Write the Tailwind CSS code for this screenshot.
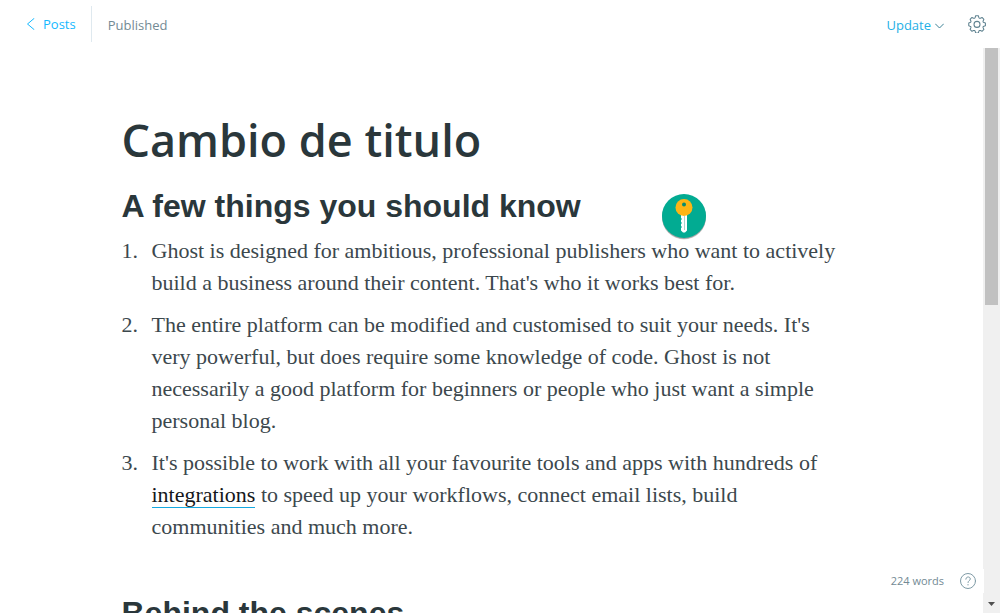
<!DOCTYPE html>
<html lang="en">
<head>
<meta charset="utf-8">
<meta name="viewport" content="width=device-width, initial-scale=1">
<title>Cambio de titulo</title>
<script src="https://cdn.jsdelivr.net/npm/@tailwindcss/browser@4"></script>
</head>
<body class="relative flex h-screen flex-col overflow-hidden bg-white font-['Open_Sans','Noto_Sans',sans-serif] text-[#738a94]">
  <header class="flex h-12 shrink-0 items-center justify-between pr-[14px] pl-[26px] text-[13px]">
    <div class="flex h-full items-center">
      <a href="#" class="flex items-center gap-2 text-[#14b8ff]">
        <svg class="h-3 w-[9px]" viewBox="0 0 9 12" fill="none" stroke="currentColor" stroke-width="1" stroke-linecap="round" aria-hidden="true"><path d="M8 .5 1.500 6 8 11.500"/></svg>
        <span class="pt-0.5">Posts</span>
      </a>
      <div class="mr-4 ml-[15px] h-9 w-px bg-[#dfe9ef]"></div>
      <span class="pt-1">Published</span>
    </div>
    <div class="flex items-center gap-6">
      <button type="button" class="flex items-center gap-1 pt-1 text-[#1fb0e6]">
        <span>Update</span>
        <svg class="h-[6px] w-[9px] text-[#3e8296]" viewBox="0 0 9 6" fill="none" stroke="currentColor" stroke-width="1" stroke-linecap="round" aria-hidden="true"><path d="M.5 1 4.500 5 8.500 1"/></svg>
      </button>
      <button type="button" aria-label="Settings">
        <svg class="size-[18px]" viewBox="0 0 24 24" fill="none" stroke="#5f8290" stroke-width="1.400" stroke-linejoin="round" aria-hidden="true"><path d="M9.600 3.200 10.200 1h3.600l.6 2.200c.3 1 1.300 1.500 2.200 1.100l2.100-1 2.500 2.500-1 2.100c-.4.900.1 1.900 1.100 2.200l1.900.6v3.600l-2 .6c-1 .3-1.400 1.300-1 2.200l1 2.100-2.500 2.500-2.100-1c-.9-.4-1.900.1-2.200 1.100l-.6 2.200h-3.600l-.6-2.200c-.3-1-1.300-1.500-2.200-1.100l-2.100 1-2.500-2.500 1-2.100c.4-.9-.1-1.900-1.100-2.200L1 14.300v-3.600l1.700-.6c1-.3 1.500-1.300 1.100-2.200l-1-2.100 2.500-2.500 2.100 1c.9.400 1.900-.1 2.200-1.100Z"/><circle cx="12" cy="12.500" r="4"/></svg>
      </button>
    </div>
  </header>

  <div class="flex min-h-0 flex-1">
    <main class="min-w-0 flex-1 overflow-hidden">
      <article class="mx-auto max-w-[740px] pt-16 text-[#2a373b]">
        <h1 class="text-[45px] leading-14 font-semibold">Cambio de titulo</h1>
        <h2 class="mt-5 font-['Liberation_Sans',Arial,sans-serif] text-[32px] leading-9 font-bold">A few things you should know</h2>
        <ol class="mt-[11px] flex flex-col gap-[10px] font-['Liberation_Serif',Georgia,serif] text-[22px] leading-8 whitespace-nowrap text-[#3c484d]">
          <li class="grid grid-cols-[30px_1fr] [counter-increment:item] before:content-[counter(item)'.']"><div>Ghost is designed for ambitious, professional publishers who want to actively<br>build a business around their content. That's who it works best for.</div></li>
          <li class="grid grid-cols-[30px_1fr] [counter-increment:item] before:content-[counter(item)'.']"><div>The entire platform can be modified and customised to suit your needs. It's<br>very powerful, but does require some knowledge of code. Ghost is not<br>necessarily a good platform for beginners or people who just want a simple<br>personal blog.</div></li>
          <li class="grid grid-cols-[30px_1fr] [counter-increment:item] before:content-[counter(item)'.']"><div>It's possible to work with all your favourite tools and apps with hundreds of<br><a href="#" class="border-b border-[#14a8e0] leading-none text-[#15171a]">integrations</a> to speed up your workflows, connect email lists, build<br>communities and much more.</div></li>
        </ol>
        <h2 class="mt-[52px] font-['Liberation_Sans',Arial,sans-serif] text-[32px] leading-9 font-bold">Behind the scenes</h2>
      </article>
    </main>
    <div class="flex w-[17px] shrink-0 flex-col items-center justify-between bg-[#f0f0f0] pb-[7px]" aria-hidden="true">
      <div class="h-[257px] w-[13px] bg-[#c1c1c1]"></div>
      <svg class="h-1 w-[7px]" viewBox="0 0 7 4" fill="#505050"><path d="M0 0h7L3.500 4Z"/></svg>
    </div>
  </div>

  <svg class="absolute top-[192px] left-[660px] size-12" viewBox="0 0 48 48" role="img" aria-label="Password key">
    <circle cx="24" cy="25.500" r="22" fill="#000" opacity=".15"/>
    <circle cx="24" cy="25" r="22" fill="#000" opacity=".25"/>
    <circle cx="24" cy="24" r="22" fill="#02ab92"/>
    <path d="M21 23h6v15.500l-2 2h-2l-2-2v-2.500l1-1-1-1v-2l1-1-1-1v-2l1-1-1-1Z" fill="#fff"/>
    <path d="M24.500 24v14" stroke="#a9d3cc" stroke-width="1"/>
    <circle cx="24" cy="15.500" r="8.500" fill="#fdb515"/>
    <circle cx="24" cy="12.500" r="2" fill="#078b70"/>
  </svg>

  <footer class="absolute right-4 bottom-5 flex items-center gap-4 bg-white py-1 pl-3 text-[11px]">
    <span>224 words</span>
    <a href="#" aria-label="Help" class="pr-2">
      <svg class="size-4" viewBox="0 0 16 16" fill="none" stroke="#7f9ba6" stroke-width="1" stroke-linecap="round" aria-hidden="true"><circle cx="8" cy="8" r="7.500"/><path d="M5.800 6.200c0-3 4.500-3 4.500-.2C10.300 7.600 8 7.600 8 9.500M8 11.500v.5"/></svg>
    </a>
  </footer>
</body>
</html>
